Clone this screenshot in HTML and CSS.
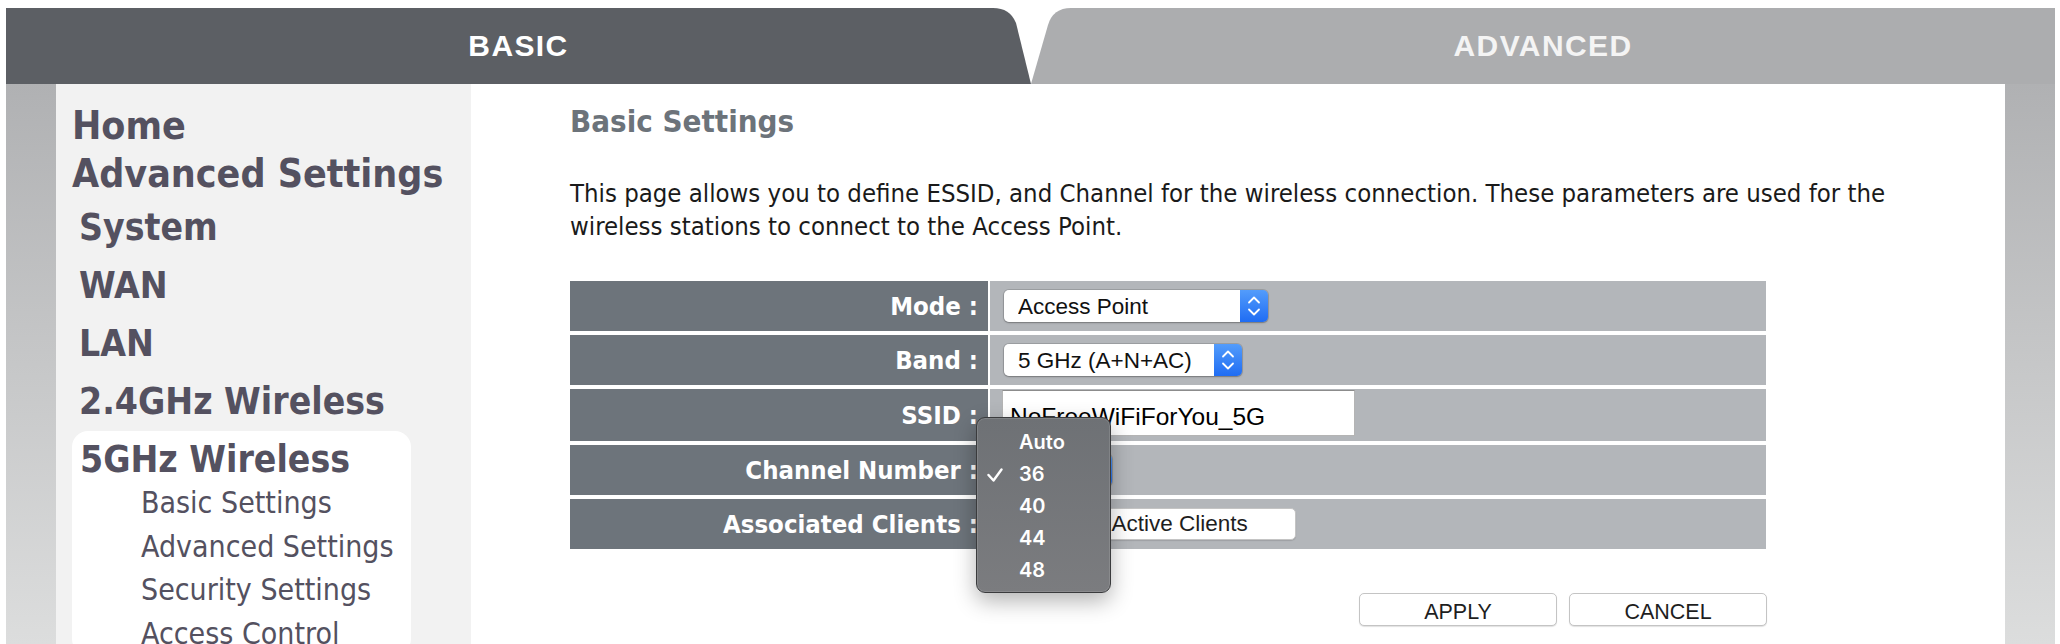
FILE: index.html
```html
<!DOCTYPE html>
<html lang="en">
<head>
    <meta charset="UTF-8">
    <meta name="viewport" content="width=device-width, initial-scale=1.0">
    <title>5GHz Wireless - Basic Settings</title>
    <link rel="stylesheet" href="styles.css">
</head>
<body>
    <div class="page">
        <div class="tabs">
            <div class="tab tab-basic">BASIC</div>
            <div class="tab tab-advanced">ADVANCED</div>
        </div>

        <div class="main">
            <div class="rail"></div>

            <div class="sidebar">
                <ul class="menu">
                    <li class="menu-top">Home</li>
                    <li class="menu-top">Advanced Settings
                        <ul class="submenu">
                            <li>System</li>
                            <li>WAN</li>
                            <li>LAN</li>
                            <li>2.4GHz Wireless</li>
                            <li class="active">5GHz Wireless
                                <ul class="pages">
                                    <li>Basic Settings</li>
                                    <li>Advanced Settings</li>
                                    <li>Security Settings</li>
                                    <li>Access Control</li>
                                </ul>
                            </li>
                        </ul>
                    </li>
                </ul>
            </div>

            <div class="content">
                <h1 class="title">Basic Settings</h1>
                <p class="intro">This page allows you to define ESSID, and Channel for the wireless connection. These parameters are used for the wireless stations to connect to the Access Point.</p>

                <div class="form-grid">
                    <div class="label">Mode :</div>
                    <div class="value">
                        <span class="select-wrap">
                            <select class="select select-mode">
                                <option>Access Point</option>
                                <option>Client</option>
                            </select>
                            <span class="select-arrow">
                                <svg width="28" height="32" viewBox="0 0 28 32"><polyline points="9,12.5 14,7.5 19,12.5"/><polyline points="9,19.5 14,24.5 19,19.5"/></svg>
                            </span>
                        </span>
                    </div>

                    <div class="label">Band :</div>
                    <div class="value">
                        <span class="select-wrap">
                            <select class="select select-band">
                                <option>5 GHz (A+N+AC)</option>
                            </select>
                            <span class="select-arrow">
                                <svg width="28" height="32" viewBox="0 0 28 32"><polyline points="9,12.5 14,7.5 19,12.5"/><polyline points="9,19.5 14,24.5 19,19.5"/></svg>
                            </span>
                        </span>
                    </div>

                    <div class="label">SSID :</div>
                    <div class="value value-top">
                        <input class="text-input" type="text" value="NoFreeWiFiForYou_5G">
                    </div>

                    <div class="label">Channel Number :</div>
                    <div class="value value-channel">
                        <span class="select-wrap">
                            <select class="select select-channel">
                                <option>36</option>
                            </select>
                            <span class="select-arrow">
                                <svg width="28" height="32" viewBox="0 0 28 32"><polyline points="9,12.5 14,7.5 19,12.5"/><polyline points="9,19.5 14,24.5 19,19.5"/></svg>
                            </span>
                        </span>
                        <ul class="dropdown">
                            <li>Auto</li>
                            <li class="checked">
                                <svg class="check" width="16" height="14" viewBox="0 0 16 14"><polyline points="1.5,7 6.5,12.5 14.5,1.5"/></svg>
                                36
                            </li>
                            <li>40</li>
                            <li>44</li>
                            <li>48</li>
                        </ul>
                    </div>

                    <div class="label">Associated Clients :</div>
                    <div class="value">
                        <button class="btn btn-clients">Show Active Clients</button>
                    </div>
                </div>

                <div class="actions">
                    <button class="btn btn-action">APPLY</button>
                    <button class="btn btn-action">CANCEL</button>
                </div>
            </div>

            <div class="rail"></div>
        </div>
    </div>
</body>
</html>
```

FILE: styles.css
```css
body {
    margin: 8px 0 0 0;
    background-color: #ffffff;
    font-family: "DejaVu Sans Condensed", "DejaVu Sans", sans-serif;
    font-stretch: condensed;
    overflow: hidden;
}
.page {
    margin: 0 5px 0 6px;
}

/* top tabs */
.tabs {
    display: flex;
    height: 76px;
}
.tab {
    display: flex;
    align-items: center;
    justify-content: center;
    font-family: "Liberation Sans", Arial, sans-serif;
    font-stretch: normal;
    font-weight: bold;
    font-size: 30px;
    letter-spacing: 1.4px;
    color: #ffffff;
}
.tab-basic {
    width: 1025px;
    background-color: #5c5f64;
    clip-path: path('M0,0 H987 Q1004,0 1010,15 L1025,76 H0 Z');
}
.tab-advanced {
    flex: 1;
    background-color: #acadaf;
    color: #f4f4f4;
    clip-path: path('M0,76 L17,17 Q22,0 40,0 H1100 V76 Z');
}

/* body area */
.main {
    display: flex;
    min-height: 560px;
}
.rail {
    width: 50px;
    background: linear-gradient(#b0b1b3, #dcdddd 560px);
}
.sidebar {
    width: 399px;
    padding: 18px 0 0 16px;
    background-color: #f2f2f2;
    color: #545160;
}
.menu,
.submenu,
.pages {
    list-style: none;
    margin: 0;
    padding: 0;
}
.menu-top {
    font-weight: bold;
    font-size: 39px;
    line-height: 48px;
    white-space: nowrap;
}
.submenu {
    margin-top: 1px;
    width: 339px;
}
.submenu > li {
    padding-left: 7px;
    font-size: 37px;
    line-height: 58px;
}
.submenu > li.active {
    padding-left: 8px;
    background-color: #ffffff;
    border-radius: 16px;
}
.pages {
    margin-top: -8px;
    padding-left: 61px;
}
.pages li {
    font-weight: normal;
    font-size: 30px;
    line-height: 43.5px;
}

/* content */
.content {
    width: 1435px;
    padding: 17px 0 0 99px;
    background-color: #ffffff;
}
.title {
    margin: 0;
    font-size: 31px;
    line-height: 40px;
    color: #6c737a;
}
.intro {
    max-width: 1380px;
    margin: 36px 0 0 0;
    font-size: 25.5px;
    line-height: 33px;
    color: #1a1a1a;
}
.form-grid {
    display: grid;
    grid-template-columns: 418px 776px;
    grid-template-rows: 50px 50px 52px 50px 50px;
    column-gap: 2px;
    row-gap: 4px;
    margin-top: 38px;
}
.label {
    display: flex;
    align-items: center;
    justify-content: flex-end;
    padding-right: 10px;
    background-color: #6d747b;
    color: #ffffff;
    font-weight: bold;
    font-size: 25.5px;
    white-space: nowrap;
}
.value {
    display: flex;
    align-items: center;
    padding-left: 14px;
    background-color: #b3b6ba;
}
.value-top {
    align-items: flex-start;
    padding-left: 12px;
}
.value-channel {
    position: relative;
}

/* mac style select */
.select-wrap {
    display: inline-flex;
    height: 32px;
    border-radius: 5px;
    overflow: hidden;
    box-shadow: 0 0 0 1px rgba(0,0,0,0.12), 0 1px 2px rgba(0,0,0,0.25);
}
.select {
    appearance: none;
    -webkit-appearance: none;
    height: 32px;
    margin: 0;
    padding: 0 14px;
    border: none;
    background-color: #ffffff;
    font-family: "Liberation Sans", Arial, sans-serif;
    font-size: 22.5px;
    color: #111111;
}
.select-mode {
    width: 236px;
}
.select-band {
    width: 210px;
}
.select-channel {
    width: 80px;
}
.select-arrow {
    width: 28px;
    height: 32px;
    background: linear-gradient(#539cfb, #1f6cf3);
}
.select-arrow svg {
    display: block;
    fill: none;
    stroke: #ffffff;
    stroke-width: 1.8;
    stroke-linecap: round;
    stroke-linejoin: round;
}

.text-input {
    box-sizing: border-box;
    width: 353px;
    height: 46px;
    margin-top: 1px;
    padding: 8px 0 0 7px;
    border: 1px solid #b4b4b4;
    border-top-color: #8c8c8c;
    background-color: #ffffff;
    font-family: "Liberation Sans", Arial, sans-serif;
    font-size: 24.5px;
    color: #000000;
    outline: none;
}

/* open channel list */
.dropdown {
    position: absolute;
    left: -14px;
    top: -28px;
    z-index: 10;
    box-sizing: border-box;
    width: 135px;
    height: 176px;
    margin: 0;
    padding: 8px 0 0 42px;
    list-style: none;
    border: 1px solid #3a3b3d;
    border-radius: 9px;
    background: linear-gradient(#6e7175, #7b7c7f);
    box-shadow: inset 0 0 0 1px rgba(255,255,255,0.12), 0 8px 22px rgba(0,0,0,0.3);
    font-family: Inter, "Liberation Sans", sans-serif;
    font-stretch: normal;
    font-weight: 600;
    font-size: 20px;
    line-height: 32px;
    color: #ffffff;
}
.dropdown li {
    position: relative;
}
.check {
    position: absolute;
    left: -32px;
    top: 10px;
    fill: none;
    stroke: #ffffff;
    stroke-width: 2.4;
    stroke-linecap: round;
    stroke-linejoin: round;
}

/* buttons */
.btn {
    box-sizing: border-box;
    border: 1px solid #c4c4c4;
    border-radius: 5px;
    background-color: #ffffff;
    box-shadow: 0 1px 1px rgba(0,0,0,0.12);
    font-family: "Liberation Sans", Arial, sans-serif;
    color: #1e1e1e;
    padding: 0;
}
.btn-clients {
    width: 294px;
    height: 32px;
    margin-left: -2px;
    font-size: 22.5px;
}
.actions {
    display: flex;
    justify-content: flex-end;
    gap: 12px;
    width: 1197px;
    margin-top: 44px;
}
.btn-action {
    width: 198px;
    height: 33px;
    padding-top: 5px;
    font-size: 21.5px;
}
```
